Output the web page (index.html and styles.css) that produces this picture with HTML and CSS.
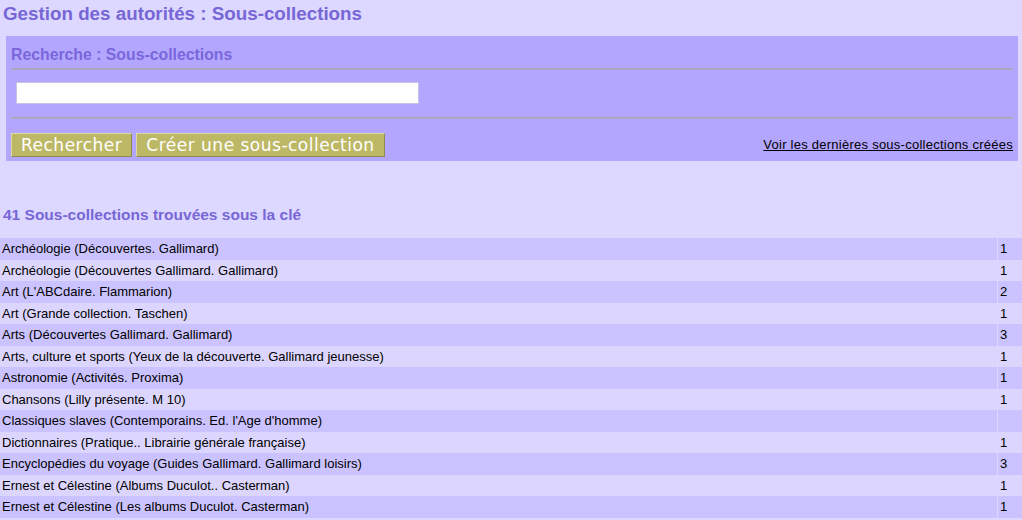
FILE: index.html
```html
<!DOCTYPE html>
<html lang="fr">
<head>
<meta charset="utf-8">
<title>Gestion des autorités : Sous-collections</title>
<link rel="stylesheet" href="styles.css">
</head>
<body>
<h1 class="title">Gestion des autorités : Sous-collections</h1>
<form class="panel">
  <h3 class="panel-title">Recherche : Sous-collections</h3>
  <hr class="sep">
  <div class="field-row"><input class="search" type="text"></div>
  <hr class="sep sep-bottom">
  <div class="actions">
    <div class="buttons">
      <button type="button" class="btn">Rechercher</button>
      <button type="button" class="btn">Créer une sous-collection</button>
    </div>
    <a class="last-link" href="#">Voir les dernières sous-collections créées</a>
  </div>
</form>
<h3 class="results-title">41 Sous-collections trouvées sous la clé</h3>
<table class="results">
  <tr class="odd"><td>Archéologie (Découvertes. Gallimard)</td><td class="num">1</td></tr>
  <tr class="even"><td>Archéologie (Découvertes Gallimard. Gallimard)</td><td class="num">1</td></tr>
  <tr class="odd"><td>Art (L'ABCdaire. Flammarion)</td><td class="num">2</td></tr>
  <tr class="even"><td>Art (Grande collection. Taschen)</td><td class="num">1</td></tr>
  <tr class="odd"><td>Arts (Découvertes Gallimard. Gallimard)</td><td class="num">3</td></tr>
  <tr class="even"><td>Arts, culture et sports (Yeux de la découverte. Gallimard jeunesse)</td><td class="num">1</td></tr>
  <tr class="odd"><td>Astronomie (Activités. Proxima)</td><td class="num">1</td></tr>
  <tr class="even"><td>Chansons (Lilly présente. M 10)</td><td class="num">1</td></tr>
  <tr class="odd"><td>Classiques slaves (Contemporains. Ed. l'Age d'homme)</td><td class="num"></td></tr>
  <tr class="even"><td>Dictionnaires (Pratique.. Librairie générale française)</td><td class="num">1</td></tr>
  <tr class="odd"><td>Encyclopédies du voyage (Guides Gallimard. Gallimard loisirs)</td><td class="num">3</td></tr>
  <tr class="even"><td>Ernest et Célestine (Albums Duculot.. Casterman)</td><td class="num">1</td></tr>
  <tr class="odd"><td>Ernest et Célestine (Les albums Duculot. Casterman)</td><td class="num">1</td></tr>
</table>
</body>
</html>
```
FILE: styles.css
```css
html, body {
  margin: 0;
  padding: 0;
  background: #ddd8ff;
  font-family: "Liberation Sans", Arial, sans-serif;
  font-size: 13px;
  color: #000;
}

.title {
  margin: 0;
  padding: 3px 3px 0;
  font-size: 18.8px;
  line-height: 22px;
  font-weight: bold;
  color: #7766d6;
}

.panel {
  margin: 11px 4px 0 6px;
  padding: 10px 5px 4px;
  background: #b3a6fe;
}

.panel-title {
  margin: 0;
  font-size: 15.8px;
  line-height: 18px;
  font-weight: bold;
  color: #7a66dc;
}

.sep {
  margin: 4px 0 0;
  height: 0;
  border: 0;
  border-top: 1px solid #a9a6b8;
  border-bottom: 1px solid #b0aac8;
}

.sep-bottom {
  margin-top: 0;
}

.field-row {
  padding: 12px 0 13px 5px;
}

.search {
  display: block;
  box-sizing: border-box;
  width: 403px;
  height: 22px;
  margin: 0;
  padding: 0 2px;
  background: #fff;
  border: 1px solid #c4c4e4;
}

.actions {
  display: flex;
  align-items: center;
  justify-content: space-between;
  margin-top: 14px;
}

.buttons {
  display: flex;
  gap: 4px;
}

.btn {
  margin: 0;
  height: 24px;
  padding: 0 9px;
  background: #bdb866;
  color: #fff;
  font-family: "DejaVu Sans", Verdana, sans-serif;
  font-size: 17px;
  letter-spacing: 0.5px;
  line-height: 20px;
  border: 1px solid;
  border-color: #dcd9a4 #8e8a52 #8e8a52 #dcd9a4;
}

.last-link {
  color: #000;
  text-decoration: underline;
  font-size: 13px;
  letter-spacing: 0.25px;
  line-height: 16px;
}

.results-title {
  margin: 45px 0 0;
  padding: 0 3px;
  font-size: 15.5px;
  line-height: 18px;
  font-weight: bold;
  color: #7766d6;
}

.results {
  margin-top: 14px;
  border-collapse: separate;
  border-spacing: 1px 0;
  margin-left: -1px;
  width: calc(100% + 2px);
}

.results td {
  padding: 3px 2px;
  line-height: 15.5px;
  white-space: nowrap;
}

.results td.num {
  width: 20px;
  padding-left: 2px;
  padding-right: 2px;
}

.results tr.odd td { background: #cbc3ff; }
.results tr.even td { background: #dcd6fe; }
```
